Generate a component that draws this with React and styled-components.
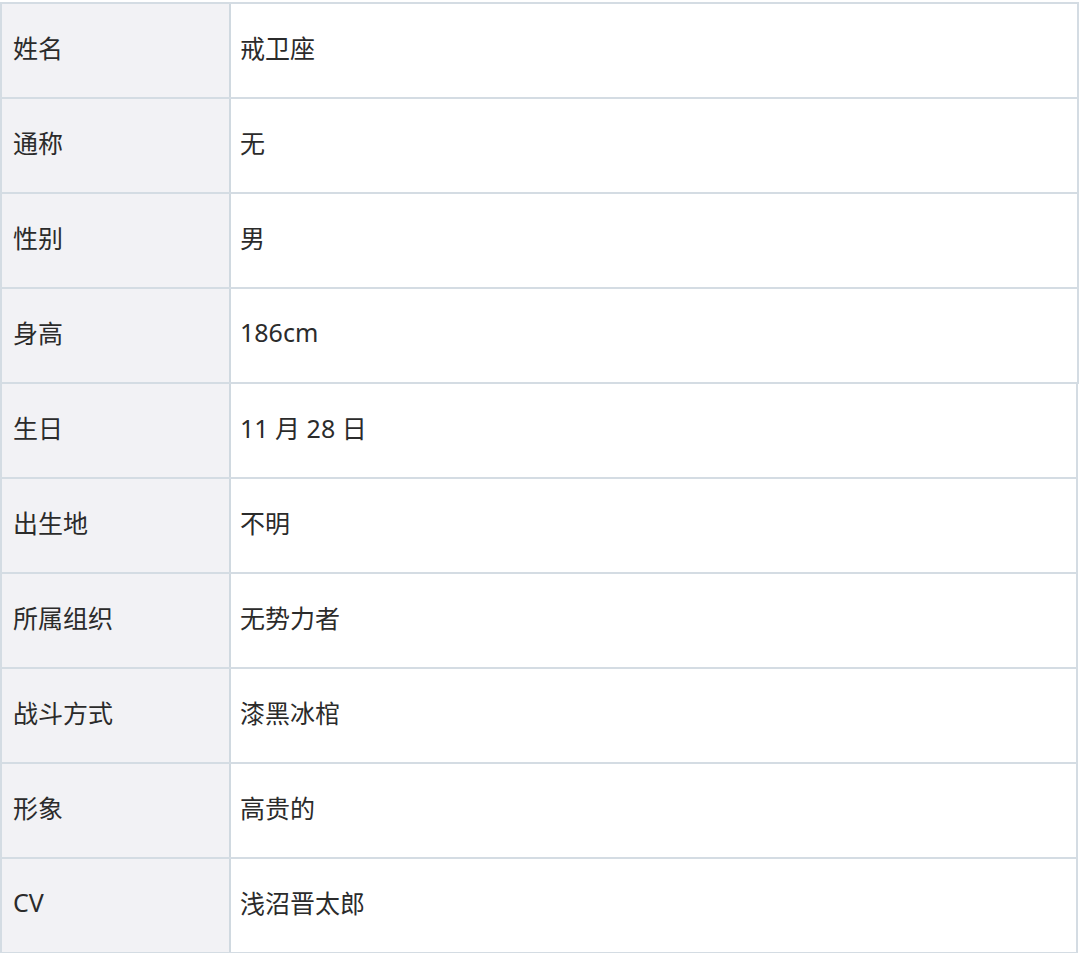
import React from "react";
import styled, { createGlobalStyle } from "styled-components";

const Global = createGlobalStyle`
  html, body { margin: 0; padding: 0; background: #ffffff; }
  body { font-family: "Noto Sans", "Noto Sans CJK SC", sans-serif; }
`;

const Page = styled.div`
  width: 1080px;
  padding-top: 2px;
  display: flex;
  flex-direction: column;
`;

const Table = styled.div`
  width: ${(p) => p.$width}px;
  border: 2px solid #d4dce3;
  border-top-width: ${(p) => (p.$first ? 2 : 0)}px;
  border-bottom: none;
  box-sizing: border-box;
  display: flex;
  flex-direction: column;
`;

const Row = styled.div`
  display: grid;
  grid-template-columns: 229px 1fr;
  height: 95px;
  box-sizing: border-box;
  border-bottom: 2px solid #d4dce3;
`;

const Cell = styled.div`
  display: flex;
  align-items: center;
  padding-bottom: 8px;
  font-size: 25px;
  font-weight: 400;
  color: #2b2b2b;
`;

const Label = styled(Cell)`
  background: #f2f2f5;
  border-right: 2px solid #d0d9e0;
  padding-left: 11px;
`;

const Value = styled(Cell)`
  background: #ffffff;
  padding-left: 9px;
`;

const groups = [
  [
    ["姓名", "戒卫座"],
    ["通称", "无"],
    ["性别", "男"],
    ["身高", "186cm"],
  ],
  [
    ["生日", "11 月 28 日"],
    ["出生地", "不明"],
    ["所属组织", "无势力者"],
    ["战斗方式", "漆黑冰棺"],
    ["形象", "高贵的"],
    ["CV", "浅沼晋太郎"],
  ],
];

export default function App() {
  return (
    <>
      <Global />
      <Page>
        {groups.map((rows, gi) => (
          <Table key={gi} $first={gi === 0} $width={gi === 0 ? 1079 : 1078}>
            {rows.map(([k, v]) => (
              <Row key={k}>
                <Label>{k}</Label>
                <Value>{v}</Value>
              </Row>
            ))}
          </Table>
        ))}
      </Page>
    </>
  );
}
